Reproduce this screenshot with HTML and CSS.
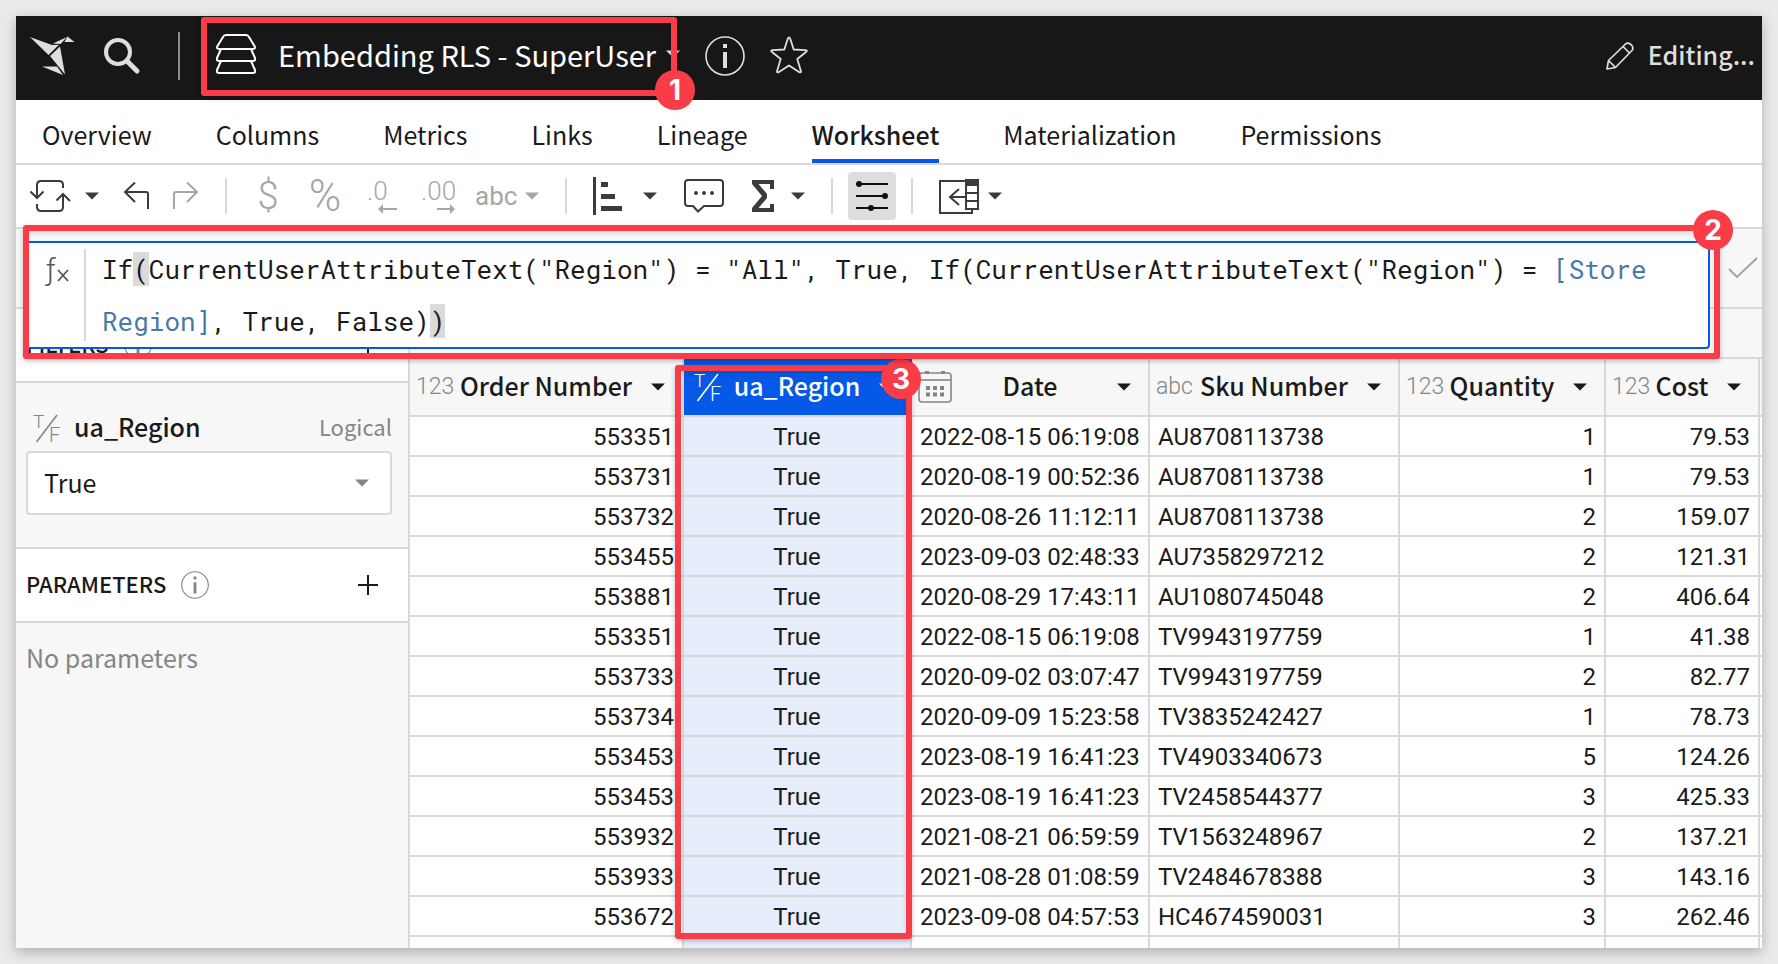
FILE: index.html
```html
<!DOCTYPE html>
<html lang="en">
<head>
<meta charset="utf-8">
<title>Embedding RLS - SuperUser</title>
<link rel="stylesheet" href="styles.css">
</head>
<body>
<svg class="defs" aria-hidden="true">
  <symbol id="caret" viewBox="0 0 14 8"><path d="M0 0.500h14L7 7.500z" fill="currentColor"/></symbol>
  <symbol id="info" viewBox="0 0 40 40"><circle cx="20" cy="20" r="19" fill="none" stroke="currentColor" stroke-width="1.600"/><path d="M18 8h4v4h-4zM18 16h4v16h-4z" fill="currentColor"/></symbol>
  <symbol id="logical" viewBox="0 0 28 30"><text x="0" y="15" font-size="19">T</text><path d="M3.500 29L24 2" stroke="currentColor" stroke-width="1.600"/><text x="16" y="29" font-size="20">F</text></symbol>
</svg>
<div class="app">
  <header class="topbar">
    <a class="logo" href="#" aria-label="Home"><svg width="46" height="40" viewBox="0 0 46 40"><g fill="#dedede"><path d="M0 1l22 8 7-0.300L18.500 19z"/><path d="M23 7.500L37 1 30.500 8z"/><path d="M37.500 0.500L44.500 6h-10z"/><path d="M30 10.500l5 28L20 20z"/><path d="M12 30.500h15l6 8.500z"/></g></svg></a>
    <button class="plain" aria-label="Search"><svg width="38" height="38" viewBox="0 0 38 38" fill="none" stroke="#dedede"><circle cx="15" cy="15" r="12" stroke-width="4"/><path d="M24 24l10 10" stroke-width="5" stroke-linecap="round"/></svg></button>
    <span class="topsep"></span>
    <div class="doc">
      <svg width="40" height="40" viewBox="0 0 40 40" fill="none" stroke="#fff" stroke-width="2" stroke-linejoin="round"><path d="M10 1h20q2 0 3 2l5.500 9q1.500 3-2 3h-33q-3.500 0-2-3L7 3q1-2 3-2z"/><path d="M5 15l-4 9q-1 3 2.500 3h33q3.500 0 2.500-3l-4-9"/><path d="M5 27l-4 9q-1 3 2.500 3h33q3.500 0 2.500-3l-4-9"/></svg>
      <button class="plain doc-name"><span>Embedding RLS - SuperUser</span><svg class="caret"><use href="#caret"/></svg></button>
      <span class="mark mark-doc"><b class="badge">1</b></span>
    </div>
    <button class="plain light" aria-label="Info"><svg width="40" height="40"><use href="#info"/></svg></button>
    <button class="plain star" aria-label="Favorite"><svg width="38" height="38" viewBox="0 0 38 38" fill="none" stroke="#dedede" stroke-width="1.800" stroke-linejoin="round"><path d="M19 1.500q0.800 0 1.300 1.500l3.400 10.500 12 0.600q2 0.300 0.600 1.600l-9 7.300 3.600 12q0.300 2-1.500 1.200L19 29.500 8.600 36.200q-1.800 0.800-1.500-1.200l3.600-12-9-7.300q-1.400-1.300 0.600-1.600l12-0.600L17.700 3Q18.200 1.500 19 1.500z"/></svg></button>
    <button class="plain editing"><svg width="28" height="28" viewBox="0 0 28 28" fill="none" stroke="#dedede" stroke-width="1.700" stroke-linejoin="round"><path d="M1 27l1.500-8.500L19.500 2q3-2 6 1 2.500 3 0.500 5.500L9.500 25.500z"/><path d="M2.500 18.500l7 7M17 4.500l6.500 6.500"/></svg><span>Editing...</span></button>
  </header>

  <nav class="tabs">
    <a href="#">Overview</a><a href="#">Columns</a><a href="#">Metrics</a><a href="#">Links</a><a href="#">Lineage</a><a href="#" class="current" aria-current="page">Worksheet</a><a href="#">Materialization</a><a href="#">Permissions</a>
  </nav>

  <div class="toolbar" role="toolbar">
    <div class="group history">
      <button class="plain split" aria-label="Refresh"><svg width="42" height="34" viewBox="0 0 42 34" fill="none" stroke="currentColor" stroke-width="2"><path d="M7 19V6q0-4 4-4h18q4 0 4 4v3M0.500 12.500L7 19l6.500-6.500"/><path d="M33 16v12q0 4-4 4H11q-4 0-4-4v-3M26.500 21.500L33 15l7 7"/></svg><svg class="caret"><use href="#caret"/></svg></button>
      <button class="plain" aria-label="Undo"><svg width="26" height="28" viewBox="0 0 26 28" fill="none" stroke="currentColor" stroke-width="2"><path d="M25 27V12q0-2-2-2H2M12 0.500L2 10l10 10"/></svg></button>
      <button class="plain off" aria-label="Redo"><svg width="26" height="28" viewBox="0 0 26 28" fill="none" stroke="currentColor" stroke-width="2"><path d="M1 27V12q0-2 2-2h21M14 0.500L24 10 14 20"/></svg></button>
    </div>
    <span class="sep"></span>
    <div class="group formats off">
      <button class="plain sign dollar">$</button>
      <button class="plain sign percent">%</button>
      <button class="plain decimals" aria-label="Decrease decimals"><span>.0</span><svg width="36" height="10" viewBox="0 0 36 10"><path d="M16 4h14v2H16v4l-5-5 5-5z" fill="currentColor"/></svg></button>
      <button class="plain decimals" aria-label="Increase decimals"><span>.00</span><svg width="36" height="10" viewBox="0 0 36 10"><path d="M16 4h13V0l5 5-5 5V6H16z" fill="currentColor"/></svg></button>
      <button class="plain abc"><span>abc</span><svg class="caret"><use href="#caret"/></svg></button>
    </div>
    <span class="sep"></span>
    <div class="group inserts">
      <button class="plain bars" aria-label="Chart"><svg width="30" height="38" viewBox="0 0 30 38" fill="currentColor"><path d="M0 0h3v38H0zM8 5h7v5H8zM8 17h14v5H8zM8 29h21v5H8z"/></svg><svg class="caret"><use href="#caret"/></svg></button>
      <button class="plain" aria-label="Comment"><svg width="40" height="34" viewBox="0 0 40 34" fill="none" stroke="currentColor" stroke-width="2"><path d="M4 1h32q3 0 3 3v20q0 3-3 3H20l-6 5.500L9 27H4q-3 0-3-3V4q0-3 3-3z"/><g fill="currentColor" stroke="none"><circle cx="12" cy="14" r="2"/><circle cx="20" cy="14" r="2"/><circle cx="28" cy="14" r="2"/></g></svg></button>
      <button class="plain sum" aria-label="Sum"><svg width="24" height="32" viewBox="0 0 24 32" fill="currentColor"><path d="M1 0h22v9h-4V4H7.500L16 14v4L7.500 28H19v-4h4v8H1v-4l10-12L1 4z"/></svg><svg class="caret"><use href="#caret"/></svg></button>
    </div>
    <span class="sep"></span>
    <button class="plain controls" aria-label="Controls" aria-pressed="true"><svg width="34" height="30" viewBox="0 0 34 30" fill="currentColor" stroke="currentColor" stroke-width="2"><path d="M3 3h30M1 15h30M1 27h32"/><g stroke="none"><circle cx="4" cy="3" r="3"/><circle cx="30" cy="15" r="3"/><circle cx="16" cy="27" r="3"/></g></svg></button>
    <span class="sep"></span>
    <button class="plain lookup" aria-label="Add column"><svg width="40" height="36" viewBox="0 0 40 36" fill="none" stroke="currentColor" stroke-width="2"><path d="M27 3H1v32h32v-3M27 19H11M20 11l-9 8 9 8"/><path d="M27 2h12v29H27zM27 15h12M27 23h12"/><path d="M27 2h12v5H27z" fill="currentColor"/></svg><svg class="caret"><use href="#caret"/></svg></button>
  </div>

  <div class="formula-bar">
    <div class="editor">
      <svg class="fx" width="30" height="34" viewBox="0 0 30 34"><text x="2" y="25" font-size="30">ƒ</text><path d="M14 15l10 11M24 15L14 26" stroke="currentColor" stroke-width="1.800"/></svg>
      <span class="rule"></span>
      <div class="code" contenteditable="true" spellcheck="false" role="textbox" aria-label="Formula">If<mark>(</mark>CurrentUserAttributeText("Region") = "All", True, If(CurrentUserAttributeText("Region") = <span class="ref">[Store Region]</span>, True, False)<mark>)</mark></div>
    </div>
    <button class="plain apply" aria-label="Apply"><svg width="30" height="22" viewBox="0 0 30 22" fill="none" stroke="currentColor" stroke-width="1.800"><path d="M1 12l8 8L29 1"/></svg></button>
    <span class="mark mark-formula"><b class="badge">2</b></span>
  </div>

  <main class="work">
    <aside class="side">
      <div class="side-head"><h2>FILTERS</h2><svg class="info"><use href="#info"/></svg><button class="plain" aria-label="Add filter"><svg width="20" height="20" viewBox="0 0 20 20" stroke="currentColor" stroke-width="2"><path d="M10 0v20M0 10h20"/></svg></button></div>
      <div class="filter">
        <div class="filter-head"><svg class="logical"><use href="#logical"/></svg><label for="region">ua_Region</label><span class="kind">Logical</span></div>
        <div class="pick"><select id="region"><option>True</option><option>False</option></select><svg class="caret"><use href="#caret"/></svg></div>
      </div>
      <div class="side-head"><h2>PARAMETERS</h2><svg class="info"><use href="#info"/></svg><button class="plain" aria-label="Add parameter"><svg width="20" height="20" viewBox="0 0 20 20" stroke="currentColor" stroke-width="2"><path d="M10 0v20M0 10h20"/></svg></button></div>
      <p class="empty">No parameters</p>
    </aside>
    <section class="sheet">
      <div class="strip"></div>
      <div class="grid">
      <table>
        <colgroup><col class="c-order"><col class="c-region"><col class="c-date"><col class="c-sku"><col class="c-qty"><col class="c-cost"><col></colgroup>
        <thead><tr>
          <th><div class="head"><span class="type">123</span><span class="name">Order Number</span><span class="more"><svg class="caret"><use href="#caret"/></svg></span></div></th>
          <th class="sel"><div class="head"><span class="type"><svg class="logical"><use href="#logical"/></svg></span><span class="name">ua_Region</span><span class="more"><svg class="caret"><use href="#caret"/></svg></span></div></th>
          <th><div class="head"><span class="type"><svg class="cal" width="34" height="32" viewBox="0 0 34 32" fill="none" stroke="currentColor" stroke-width="1.600"><rect x="1" y="2" width="32" height="29" rx="3"/><path d="M1 9h32"/><path d="M7 1.500h4M23 1.500h4" stroke-width="3"/><path d="M8 17h4m3 0h4m3 0h4M8 23.500h4m3 0h4m3 0h4" stroke-width="4"/></svg></span><span class="name">Date</span><span class="more"><svg class="caret"><use href="#caret"/></svg></span></div></th>
          <th><div class="head"><span class="type">abc</span><span class="name">Sku Number</span><span class="more"><svg class="caret"><use href="#caret"/></svg></span></div></th>
          <th><div class="head"><span class="type">123</span><span class="name">Quantity</span><span class="more"><svg class="caret"><use href="#caret"/></svg></span></div></th>
          <th><div class="head"><span class="type">123</span><span class="name">Cost</span><span class="more"><svg class="caret"><use href="#caret"/></svg></span></div></th>
          <th></th>
        </tr></thead>
        <tbody>
          <tr><td>553351</td><td>True</td><td>2022-08-15 06:19:08</td><td>AU8708113738</td><td>1</td><td>79.53</td><td></td></tr>
          <tr><td>553731</td><td>True</td><td>2020-08-19 00:52:36</td><td>AU8708113738</td><td>1</td><td>79.53</td><td></td></tr>
          <tr><td>553732</td><td>True</td><td>2020-08-26 11:12:11</td><td>AU8708113738</td><td>2</td><td>159.07</td><td></td></tr>
          <tr><td>553455</td><td>True</td><td>2023-09-03 02:48:33</td><td>AU7358297212</td><td>2</td><td>121.31</td><td></td></tr>
          <tr><td>553881</td><td>True</td><td>2020-08-29 17:43:11</td><td>AU1080745048</td><td>2</td><td>406.64</td><td></td></tr>
          <tr><td>553351</td><td>True</td><td>2022-08-15 06:19:08</td><td>TV9943197759</td><td>1</td><td>41.38</td><td></td></tr>
          <tr><td>553733</td><td>True</td><td>2020-09-02 03:07:47</td><td>TV9943197759</td><td>2</td><td>82.77</td><td></td></tr>
          <tr><td>553734</td><td>True</td><td>2020-09-09 15:23:58</td><td>TV3835242427</td><td>1</td><td>78.73</td><td></td></tr>
          <tr><td>553453</td><td>True</td><td>2023-08-19 16:41:23</td><td>TV4903340673</td><td>5</td><td>124.26</td><td></td></tr>
          <tr><td>553453</td><td>True</td><td>2023-08-19 16:41:23</td><td>TV2458544377</td><td>3</td><td>425.33</td><td></td></tr>
          <tr><td>553932</td><td>True</td><td>2021-08-21 06:59:59</td><td>TV1563248967</td><td>2</td><td>137.21</td><td></td></tr>
          <tr><td>553933</td><td>True</td><td>2021-08-28 01:08:59</td><td>TV2484678388</td><td>3</td><td>143.16</td><td></td></tr>
          <tr><td>553672</td><td>True</td><td>2023-09-08 04:57:53</td><td>HC4674590031</td><td>3</td><td>262.46</td><td></td></tr>
          <tr><td>553705</td><td>True</td><td>2020-09-12 08:15:36</td><td>HC4674590032</td><td>1</td><td>97.49</td><td></td></tr>
        </tbody>
      </table>
      <span class="mark mark-column"><b class="badge">3</b></span>
      </div>
    </section>
  </main>
</div>
</body>
</html>
```
FILE: styles.css
```css
:root {
  --line: #d9d9d9;
  --panel: #f7f7f7;
  --ink: #1a1a1a;
  --gray: #858585;
  --blue: #0559e6;
  --red: #f83c48;
}
* { box-sizing: border-box; }
body {
  margin: 0;
  padding: 16px;
  height: 100vh;
  background: #eaeaea;
  color: var(--ink);
  font: 25px/1 "Noto Sans CJK SC", "Noto Sans", sans-serif;
}
svg { display: block; flex: none; }
svg text { font-family: Roboto, sans-serif; font-weight: 300; fill: currentColor; }
.defs { display: none; }
.plain {
  display: flex;
  align-items: center;
  padding: 0;
  border: 0;
  background: none;
  color: inherit;
  font: inherit;
}
.caret { width: 14px; height: 8px; }
.app {
  display: flex;
  flex-direction: column;
  height: 100%;
  background: #fff;
  box-shadow: 0 4px 12px rgba(0, 0, 0, 0.25);
}

/* Top bar */
.topbar {
  display: flex;
  align-items: center;
  flex: none;
  height: 84px;
  padding: 0 7px 4px 14px;
  background: #171717;
  color: #dedede;
}
.logo { margin-right: 27px; }
.topsep { width: 2px; height: 48px; margin: 0 20px 0 37px; background: #8c8c8c; }
.doc {
  position: relative;
  display: flex;
  align-items: center;
  gap: 22px;
  margin: 0 25px 4px 0;
  padding-left: 16px;
}
.doc-name { gap: 10px; font-size: 29px; }
.doc-name span { color: #fff; }
.star { margin: 0 0 2px 25px; }
.editing { gap: 14px; margin-left: auto; font-size: 25px; font-weight: 500; }
.editing span { padding-bottom: 4px; }

/* Tabs */
.tabs {
  display: flex;
  flex: none;
  gap: 64px;
  height: 65px;
  padding: 0 26px;
  border-bottom: 2px solid var(--line);
}
.tabs a {
  padding-top: 4px;
  border-bottom: 4px solid transparent;
  color: inherit;
  line-height: 60px;
  height: 63px;
  text-decoration: none;
}
.tabs .current { border-color: var(--blue); font-weight: 500; }

/* Toolbar */
.toolbar {
  display: flex;
  align-items: center;
  flex: none;
  height: 64px;
  padding: 0 14px;
  border-bottom: 2px solid var(--line);
  color: #3b3b3b;
}
.group { display: flex; align-items: center; }
.off { color: #a6a6a6; }
.history { gap: 24px; }
.split { gap: 13px; }
.sep { width: 2px; height: 36px; margin: 0 26px; background: var(--line); }
.formats { gap: 18px; }
.sign { justify-content: center; font: 300 38px/36px Roboto, sans-serif; }
.dollar { width: 30px; }
.percent { width: 48px; font-size: 44px; }
.decimals { flex-direction: column; align-items: flex-start; width: 36px; font: 300 26px/26px Roboto, sans-serif; }
.abc { gap: 8px; font: 400 26px/30px Roboto, sans-serif; }
.inserts { gap: 27px; }
.bars { gap: 20px; }
.sum { gap: 16px; }
.controls {
  justify-content: center;
  width: 48px;
  height: 48px;
  margin: 0 -11px;
  border-radius: 4px;
  background: #dedede;
  color: #111;
}
.lookup { gap: 9px; }

/* Formula bar */
.formula-bar {
  position: relative;
  z-index: 2;
  display: flex;
  align-items: center;
  justify-content: flex-end;
  flex: none;
  height: 80px;
  padding: 0 4px;
  border-bottom: 2px solid var(--line);
  background: var(--panel);
}
.editor {
  position: absolute;
  top: 12px;
  left: 8px;
  right: 52px;
  display: flex;
  padding: 0 0 0 18px;
  border: 2px solid var(--blue);
  border-radius: 4px;
  background: #fff;
}
.fx { margin: 12px 10px 0 0; color: #555; overflow: visible; }
.rule { width: 2px; margin: 6px 0; background: var(--line); }
.code {
  flex: 1;
  padding-left: 16px;
  font: 26px/52px "Roboto Mono", "DejaVu Sans Mono", monospace;
}
.code:focus { outline: 0; }
.code mark { background: #dadada; color: inherit; }
.code .ref { color: #4a78a8; }
.apply { color: #a0a0a0; }

/* Sidebar */
.work { display: flex; flex: 1; min-height: 0; overflow: hidden; }
.side { width: 394px; flex: none; border-right: 2px solid var(--line); background: var(--panel); }
.side-head {
  display: flex;
  align-items: center;
  height: 74px;
  padding: 0 30px 0 10px;
  border-bottom: 2px solid var(--line);
  background: #fff;
}
.side-head h2 { margin: 0 15px 0 0; padding-bottom: 4px; font-size: 22px; font-weight: 500; }
.side-head .plain { margin-left: auto; }
.info { width: 28px; height: 28px; color: var(--gray); }
.filter { height: 166px; padding: 22px 16px 0 10px; border-bottom: 2px solid var(--line); }
.filter-head { display: flex; align-items: center; height: 46px; }
.filter-head .logical { margin: 0 13px 0 7px; color: var(--gray); }
.filter-head label { padding-bottom: 4px; font-weight: 500; }
.kind { margin-left: auto; padding-bottom: 4px; color: var(--gray); font-size: 22px; }
.logical { width: 28px; height: 30px; }
.pick { position: relative; }
.pick select {
  width: 100%;
  height: 64px;
  padding: 0 16px 2px;
  border: 2px solid var(--line);
  border-radius: 4px;
  appearance: none;
  background: #fff;
  color: inherit;
  font: inherit;
}
.pick .caret { position: absolute; top: 28px; right: 23px; color: var(--gray); pointer-events: none; }
.empty { margin: 22px 10px; color: var(--gray); }

/* Sheet */
.sheet { flex: 1; min-width: 0; }
.strip { height: 50px; border-bottom: 2px solid var(--line); background: var(--panel); }
.grid { position: relative; }
table { width: 100%; table-layout: fixed; border-spacing: 0; }
.c-order { width: 274px; }
.c-region { width: 228px; }
.c-date { width: 238px; }
.c-sku { width: 250px; }
.c-qty { width: 206px; }
.c-cost { width: 154px; }
th, td { padding: 0; border-right: 2px solid var(--line); border-bottom: 2px solid var(--line); }
th:last-child, td:last-child { border-right: 0; }
th { height: 58px; background: var(--panel); font-weight: 500; text-align: left; }
.head { display: flex; align-items: center; justify-content: space-between; }
.name { flex: 1; display: flex; justify-content: center; min-width: 0; padding-bottom: 4px; white-space: nowrap; }
.type { width: 50px; padding-left: 6px; color: var(--gray); font: 300 23px/30px Roboto, sans-serif; }
.more { display: flex; justify-content: flex-end; width: 50px; padding-right: 17px; }
.sel { border-right-color: var(--blue); background: var(--blue); color: #fff; }
.sel .type { padding-left: 10px; color: #fff; }
td { height: 40px; padding: 2px 8px 0; font: 24px/36px Roboto, sans-serif; white-space: nowrap; }
td:nth-child(1), td:nth-child(5), td:nth-child(6) { text-align: right; }
td:nth-child(2) { background: #e6edfb; text-align: center; }
td:last-child { padding: 0; }

/* Callouts */
.mark {
  position: absolute;
  border: 6px solid var(--red);
  border-radius: 3px;
  box-shadow: 0 2px 5px rgba(0, 0, 0, 0.25), inset 0 3px 5px rgba(0, 0, 0, 0.1);
  pointer-events: none;
}
.badge {
  position: absolute;
  display: flex;
  align-items: center;
  justify-content: center;
  width: 40px;
  height: 40px;
  border-radius: 50%;
  background: var(--red);
  color: #fff;
  font: 700 28px/40px Inter, sans-serif;
}
.mark-doc { top: -17px; left: 1px; right: 3px; height: 79px; }
.mark-doc .badge { right: -24px; bottom: -20px; }
.mark-formula { top: -4px; left: 7px; right: 42px; height: 134px; }
.mark-formula .badge { top: -21px; right: -19px; }
.mark-column { top: 6px; left: 265px; width: 237px; height: 574px; }
.mark-column .badge { top: -12px; right: -15px; }
```
